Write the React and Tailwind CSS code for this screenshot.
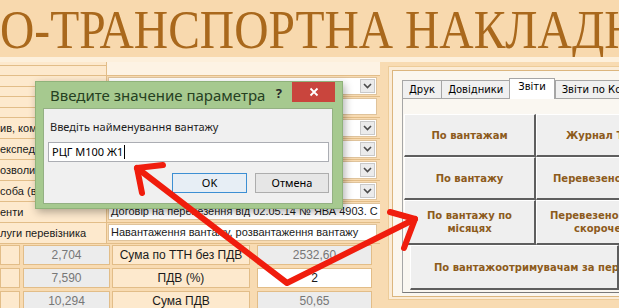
import React from 'react';

const border = 'border-[#e2bd88]';

function Chevron() {
  return (
    <svg width="9" height="6" viewBox="0 0 9 6">
      <polyline points="1,1 4.5,4.5 8,1" fill="none" stroke="#4b4b4b" strokeWidth="1.6" />
    </svg>
  );
}

function Combo({ children }) {
  return (
    <div className="flex h-[18px] bg-white border border-[#dfc39b]">
      <div className="flex-1 overflow-hidden whitespace-nowrap px-[3px] leading-[16px]">{children}</div>
      <div className="w-[15px] h-[14px] mt-[1px] mr-[1px] bg-[#ebebeb] border border-[#c9c9c9] flex items-center justify-center">
        <Chevron />
      </div>
    </div>
  );
}

function Field({ children }) {
  return (
    <div className="h-[17px] bg-white border border-[#dfc39b] overflow-hidden whitespace-nowrap px-[2px] leading-[15px] text-[11px] text-[#1a1a1a]">
      {children}
    </div>
  );
}

function Row({ label, children }) {
  return (
    <div className={`flex h-[21px] border-b ${border}`}>
      <div className={`w-[107px] shrink-0 bg-[#fde9cd] border-r ${border} overflow-hidden whitespace-nowrap leading-[20px] text-[11px] text-[#1a1a1a]`}>
        {label}
      </div>
      <div className="flex-1 pl-[1px] pr-[3px] pt-[1px]">{children}</div>
    </div>
  );
}

function SplitLabelRow({ children }) {
  return (
    <div className={`flex h-[21px] border-b ${border}`}>
      <div className={`w-[107px] shrink-0 flex flex-col border-r ${border}`}>
        <div className={`h-[11px] bg-[#fde9cd] border-b ${border}`} />
        <div className="flex-1 bg-[#fde9cd]" />
      </div>
      <div className="flex-1 pl-[1px] pr-[3px] pt-[1px]">{children}</div>
    </div>
  );
}

function Cells({ a, b, c, white }) {
  return (
    <div className="flex h-[23px] pt-[1px] text-center leading-[18px] text-[12px]">
      <div className={`w-[20px] h-[20px] bg-[#fde9cd] border ${border}`} />
      <div className={`w-[87px] h-[20px] ml-[3px] bg-[#ececec] border ${border} text-[#777777]`}>{a}</div>
      <div className={`w-[138px] h-[20px] ml-[2px] bg-[#fde9cd] border ${border} text-[#1a1a1a]`}>{b}</div>
      <div className={`w-[115px] h-[20px] ml-[7px] border ${border} ${white ? 'bg-white text-[#1a1a1a]' : 'bg-[#ececec] text-[#777777]'}`}>{c}</div>
    </div>
  );
}

function LeftPanel() {
  return (
    <div className="w-[380px] shrink-0 bg-[#f8dbb2]">
      <div className={`flex h-[14px] border-b ${border}`}>
        <div className={`w-[107px] shrink-0 flex flex-col border-r ${border}`}>
          <div className={`h-[4px] border-b ${border} bg-[#fde9cd]`} />
          <div className="flex-1 bg-[#fde9cd]" />
        </div>
        <div className="flex-1 bg-[#fdf3e4]" />
      </div>
      <SplitLabelRow>
        <Combo>
          <span className="pl-[2px]">і</span>
          <span className="pl-[32px]">і</span>
        </Combo>
      </SplitLabelRow>
      <SplitLabelRow>
        <Field>&nbsp;</Field>
      </SplitLabelRow>
      <Row label="ив, комісіонер"><Combo>&nbsp;</Combo></Row>
      <Row label="експедитор"><Combo>&nbsp;</Combo></Row>
      <Row label="озволи"><Combo>&nbsp;</Combo></Row>
      <Row label="соба (вантаж)"><Combo>&nbsp;</Combo></Row>
      <Row label="енти"><Field>Договір на перевезення від 02.05.14 № ЯВА 4903. С</Field></Row>
      <Row label="луги перевізника"><Field>Навантаження вантажу, розвантаження вантажу</Field></Row>
      <Cells a="2,704" b="Сума по ТТН без ПДВ" c="2532,60" />
      <Cells a="7,590" b="ПДВ (%)" c="2" white />
      <Cells a="10,294" b="Сума ПДВ" c="50,65" />
    </div>
  );
}

function Btn({ children, className = '' }) {
  return (
    <div
      className={`flex flex-col justify-center bg-[#efefef] border-t border-l border-t-white border-l-white border-r-2 border-b-2 border-r-[#5e5e5e] border-b-[#5e5e5e] font-['DejaVu_Sans',sans-serif] font-bold text-[10px] leading-[13px] text-[#8d5b1c] whitespace-nowrap overflow-hidden ${className}`}
    >
      {children}
    </div>
  );
}

function RightPanel() {
  const tabs = ['Друк', 'Довідники', 'Звіти', 'Звіти по Комісіонерах'];
  return (
    <div className="flex-1 pl-[8px] pt-[4px] bg-[#f8dbb2] overflow-hidden">
      <div className="h-[234px] border-l border-t border-b border-[#edcc99] bg-[#fbecd7] pl-[3px] pt-[3px] pb-[2px]">
        <div className="h-full border-l border-t border-b border-[#dcb67e] bg-[#fbf7ef] pl-[9px] pt-[9px] pb-[3px]">
          <div className="flex h-[18px] font-['DejaVu_Sans',sans-serif] text-[10px] whitespace-nowrap">
            {tabs.map((t, i) =>
              i === 2 ? (
                <div key={t} className="h-[21px] -mt-[2px] px-[8px] bg-white border-t border-l border-r border-[#a6a6a6] leading-[16px] relative z-10">
                  {t}
                </div>
              ) : (
                <div key={t} className="px-[6px] bg-[#f0f0f0] border-t border-l border-[#a6a6a6] leading-[17px]">
                  {t}
                </div>
              )
            )}
          </div>
          <div className="h-[195px] border-t border-l border-b border-[#a6a6a6] border-b-[#7a7a7a] bg-[#faf7f1] pl-[1px] pt-[15px]">
            <div className="grid grid-cols-[132px_170px] grid-rows-[43px_43px_45px]">
              <Btn className="items-center">По вантажам</Btn>
              <Btn className="pl-[29px]">Журнал ТТН за період</Btn>
              <Btn className="items-center">По вантажу</Btn>
              <Btn className="pl-[16px]">Перевезено вантажу</Btn>
              <Btn className="items-center text-center">
                <span>По вантажу по</span>
                <span>місяцях</span>
              </Btn>
              <Btn>
                <span className="pl-[13px]">Перевезено вантажу</span>
                <span className="pl-[37px]">скорочено</span>
              </Btn>
            </div>
            <Btn className="h-[45px] ml-[6px] pl-[23px]">По вантажоотримувачам за період</Btn>
          </div>
        </div>
      </div>
    </div>
  );
}

function Dialog() {
  return (
    <div className="absolute left-[35px] top-[81px] w-[308px] h-[128px] flex flex-col bg-[#a6c98f] border border-[#8fb27a] shadow-[2px_3px_8px_rgba(0,0,0,0.3)] font-['Noto_Sans',sans-serif]">
      <div className="flex h-[26px] items-start">
        <div className="flex-1 pl-[14px] pt-[3px] text-[15px] leading-[20px] text-[#25401f] whitespace-nowrap">
          Введите значение параметра
        </div>
        <div className="pt-[2px] mr-[10px] text-[13px] font-bold text-[#2a2a2a]">?</div>
        <div className="w-[43px] h-[20px] mr-[7px] bg-[#c9453d] flex items-center justify-center">
          <svg width="10" height="10" viewBox="0 0 10 10">
            <path d="M1.5 1.5 L8.5 8.5 M8.5 1.5 L1.5 8.5" stroke="#fff" strokeWidth="1.8" />
          </svg>
        </div>
      </div>
      <div className="flex-1 ml-[7px] mr-[9px] mb-[4px] bg-[#f0f0f0] border border-[#94b083] pl-[4px] pr-[3px] pt-[11px]">
        <div className="pl-[2px] text-[11px] leading-[14px] text-[#1e1e1e]">Введіть найменування вантажу</div>
        <div className="mt-[8px] h-[20px] bg-white border border-[#abadb3] flex items-center pl-[3px] text-[11px] text-black">
          РЦГ М100 Ж1
          <span className="ml-[1px] w-px h-[14px] bg-black" />
        </div>
        <div className="mt-[11px] flex justify-end gap-[8px] text-[11px]">
          <div className="w-[75px] h-[20px] bg-[#e7eef5] border border-[#3d8fd3] flex items-center justify-center">OK</div>
          <div className="w-[74px] h-[20px] bg-[#e6e6e6] border border-[#adadad] flex items-center justify-center">Отмена</div>
        </div>
      </div>
    </div>
  );
}

function Arrows() {
  return (
    <svg className="absolute left-0 top-0 pointer-events-none" width="619" height="308" viewBox="0 0 619 308">
      <g fill="none" stroke="#f01d0d" strokeWidth="6" strokeLinecap="round" strokeLinejoin="round">
        <polyline points="137,168 287,283 415,219" />
        <polyline points="163,165 137,168 142,193" />
        <polyline points="390,212 415,219 404,248" />
      </g>
    </svg>
  );
}

export default function App() {
  return (
    <div className="relative w-[619px] h-[308px] overflow-hidden bg-[#f8dbb2] font-['Liberation_Sans',sans-serif] text-[12px] text-black">
      <div className="h-[57px] overflow-hidden whitespace-nowrap bg-[#f8d9ae]">
        <div className="origin-left scale-x-[0.88] pt-[3px] font-['Liberation_Serif',serif] text-[54px] leading-none text-[#a9681c]">
          О-ТРАНСПОРТНА НАКЛАДНА
        </div>
      </div>
      <div className="h-[5px] bg-[#fdf0dc]" />
      <div className="flex h-[246px]">
        <LeftPanel />
        <RightPanel />
      </div>
      <Dialog />
      <Arrows />
    </div>
  );
}
